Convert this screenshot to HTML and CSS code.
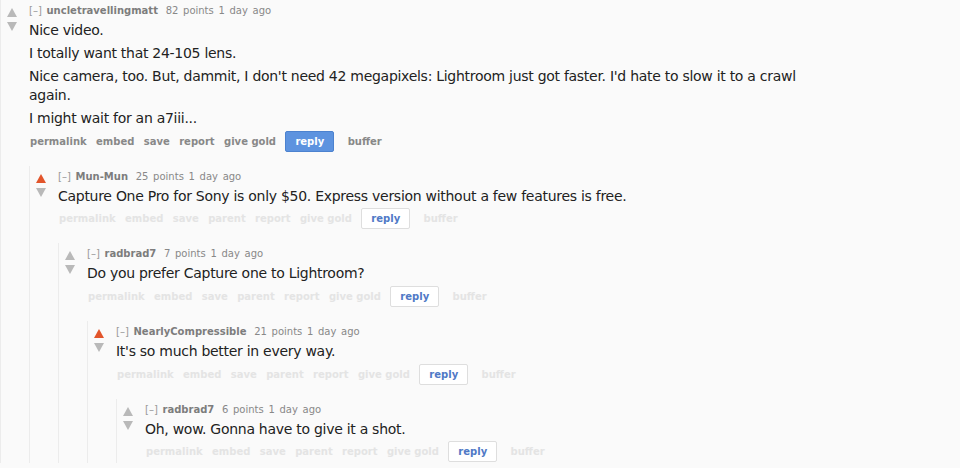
FILE: index.html
```html
<!DOCTYPE html>
<html>
<head>
<meta charset="utf-8">
<link rel="stylesheet" href="styles.css">
</head>
<body>
<div class="comment">
  <div class="midcol"><span class="arrow up"></span><span class="arrow down"></span></div>
  <div class="entry">
    <p class="tagline"><span class="expand">[–]</span> <span class="author">uncletravellingmatt</span> <span class="score">82 points</span> <span class="time">1 day ago</span></p>
    <div class="md">
      <p>Nice video.</p>
      <p>I totally want that 24-105 lens.</p>
      <p>Nice camera, too. But, dammit, I don't need 42 megapixels: Lightroom just got faster. I'd hate to slow it to a crawl again.</p>
      <p>I might wait for an a7iii...</p>
    </div>
    <ul class="buttons active">
      <li>permalink</li><li>embed</li><li>save</li><li>report</li><li>give gold</li><li class="reply">reply</li><li class="buffer">buffer</li>
    </ul>
  </div>
  <div class="child">
    <div class="comment">
      <div class="midcol"><span class="arrow up liked"></span><span class="arrow down"></span></div>
      <div class="entry">
        <p class="tagline"><span class="expand">[–]</span> <span class="author">Mun-Mun</span> <span class="score">25 points</span> <span class="time">1 day ago</span></p>
        <div class="md"><p>Capture One Pro for Sony is only $50. Express version without a few features is free.</p></div>
        <ul class="buttons">
          <li>permalink</li><li>embed</li><li>save</li><li>parent</li><li>report</li><li>give gold</li><li class="reply">reply</li><li class="buffer">buffer</li>
        </ul>
      </div>
      <div class="child">
        <div class="comment">
          <div class="midcol"><span class="arrow up"></span><span class="arrow down"></span></div>
          <div class="entry">
            <p class="tagline"><span class="expand">[–]</span> <span class="author">radbrad7</span> <span class="score">7 points</span> <span class="time">1 day ago</span></p>
            <div class="md"><p>Do you prefer Capture one to Lightroom?</p></div>
            <ul class="buttons">
              <li>permalink</li><li>embed</li><li>save</li><li>parent</li><li>report</li><li>give gold</li><li class="reply">reply</li><li class="buffer">buffer</li>
            </ul>
          </div>
          <div class="child">
            <div class="comment">
              <div class="midcol"><span class="arrow up liked"></span><span class="arrow down"></span></div>
              <div class="entry">
                <p class="tagline"><span class="expand">[–]</span> <span class="author">NearlyCompressible</span> <span class="score">21 points</span> <span class="time">1 day ago</span></p>
                <div class="md"><p>It's so much better in every way.</p></div>
                <ul class="buttons">
                  <li>permalink</li><li>embed</li><li>save</li><li>parent</li><li>report</li><li>give gold</li><li class="reply">reply</li><li class="buffer">buffer</li>
                </ul>
              </div>
              <div class="child">
                <div class="comment">
                  <div class="midcol"><span class="arrow up"></span><span class="arrow down"></span></div>
                  <div class="entry">
                    <p class="tagline"><span class="expand">[–]</span> <span class="author">radbrad7</span> <span class="score">6 points</span> <span class="time">1 day ago</span></p>
                    <div class="md"><p>Oh, wow. Gonna have to give it a shot.</p></div>
                    <ul class="buttons">
                      <li>permalink</li><li>embed</li><li>save</li><li>parent</li><li>report</li><li>give gold</li><li class="reply">reply</li><li class="buffer">buffer</li>
                    </ul>
                  </div>
                </div>
              </div>
            </div>
          </div>
        </div>
      </div>
    </div>
  </div>
</div>
</body>
</html>
```
FILE: styles.css
```css
html, body {
  margin: 0;
  padding: 0;
  background: #fafafa;
  font-family: Verdana, "DejaVu Sans", sans-serif;
  color: #222;
  overflow: hidden;
}
.comment {
  display: grid;
  grid-template-columns: 28px 1fr;
  border-left: 1px solid #ececec;
}
.midcol {
  grid-column: 1;
  grid-row: 1;
  display: flex;
  flex-direction: column;
  padding: 8px 0 0 6px;
  gap: 5px;
}
.arrow {
  display: block;
  width: 0;
  height: 0;
  border-left: 5.5px solid transparent;
  border-right: 5.5px solid transparent;
}
.arrow.up {
  border-bottom: 9px solid #b9b9b9;
}
.arrow.up.liked {
  border-bottom-color: #e2552b;
}
.arrow.down {
  border-top: 9px solid #b9b9b9;
}
.entry {
  grid-column: 2;
  grid-row: 1;
  padding-top: 3px;
}
.child {
  grid-column: 2;
  grid-row: 2;
  padding-top: 13.7px;
}
.tagline {
  margin: 0;
  font-size: 10px;
  line-height: 15px;
  color: #888;
  word-spacing: 1.5px;
}
.tagline .author {
  font-weight: bold;
  color: #7d7d7d;
  margin-right: 3px;
}
.tagline .expand {
  color: #999;
}
.md {
  font-size: 14px;
  line-height: 19px;
  letter-spacing: -0.28px;
  max-width: 800px;
  margin-top: 3px;
}
.md p {
  margin: 0 0 4px;
}
.md p:last-child {
  margin-bottom: 2px;
}
.buttons {
  list-style: none;
  margin: 0;
  padding: 0 0 0 1px;
  display: flex;
  align-items: center;
  gap: 9.4px;
  font-size: 10px;
  font-weight: bold;
  height: 22px;
  color: #e4e4e4;
}
.buttons.active {
  color: #888;
}
.buttons .reply {
  border: 1px solid #dedede;
  background: #fff;
  color: #5079c6;
  padding: 2px 9px;
  line-height: 15px;
  border-radius: 2px;
  margin-right: 4px;
}
.buttons.active .reply {
  background: #5d93df;
  border-color: #4c82cf;
  color: #fff;
}
```
